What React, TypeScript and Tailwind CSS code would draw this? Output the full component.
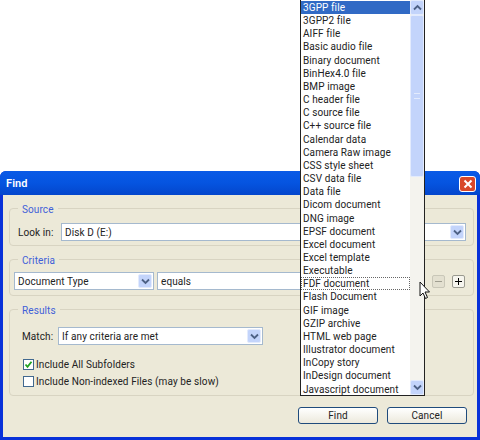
const items = ["3GPP file","3GPP2 file","AIFF file","Basic audio file","Binary document","BinHex4.0 file","BMP image","C header file","C source file","C++ source file","Calendar data","Camera Raw image","CSS style sheet","CSV data file","Data file","Dicom document","DNG image","EPSF document","Excel document","Excel template","Executable","FDF document","Flash Document","GIF image","GZIP archive","HTML web page","Illustrator document","InCopy story","InDesign document","Javascript document"];

function Chevron({ up = false }: { up?: boolean }) {
  return (
    <svg width="9" height="7" viewBox="0 0 9 7" className={up ? "rotate-180" : ""}>
      <path d="M1 1.5 L4.5 5 L8 1.5" fill="none" stroke="#4d6185" strokeWidth="1.8" />
    </svg>
  );
}

function Arrow() {
  return (
    <div className="w-[14px] self-stretch m-px flex items-center justify-center rounded-[2px] bg-[#c3d4fb] border border-[#e3ebfd]">
      <Chevron />
    </div>
  );
}

function Select({ text, className }: { text: string; className: string }) {
  return (
    <div className={`h-[18px] flex items-center bg-white border border-[#a5b9ce] ${className}`}>
      <span className="flex-1 pl-[3px] truncate">{text}</span>
      <Arrow />
    </div>
  );
}

function Group({ title, className, children }: { title: string; className: string; children: any }) {
  return (
    <div className={`relative ml-[6px] mr-[3px] border border-[#d8d4c2] rounded-[4px] ${className}`}>
      <span className="absolute left-[8px] top-[-6px] px-[4px] bg-[#ece9d8] text-[#3f5fd8] leading-[14px]">{title}</span>
      {children}
    </div>
  );
}

function Check({ checked, label }: { checked?: boolean; label: string }) {
  return (
    <div className="flex items-center gap-[2px] h-[17px]">
      <div className="w-[11px] h-[11px] border border-[#41688f] bg-white flex items-center justify-center">
        {checked && (
          <svg width="9" height="9" viewBox="0 0 9 9">
            <path d="M1.5 4.5 L3.5 6.8 L7.5 1.8" fill="none" stroke="#21a121" strokeWidth="1.8" />
          </svg>
        )}
      </div>
      <span>{label}</span>
    </div>
  );
}

function Btn({ text }: { text: string }) {
  return (
    <div className="h-[17px] w-[80px] flex items-center justify-center rounded-[3px] border border-[#1f4b7c] bg-gradient-to-b from-white to-[#ece9dc]">
      {text}
    </div>
  );
}

export default function App() {
  return (
    <div className="relative w-[480px] h-[440px] bg-white overflow-hidden pt-[171px] text-[10px] tracking-[0.1px] leading-[13px] text-[#222]" style={{ fontFamily: 'Roboto, sans-serif' }}>
      <div className="h-[269px] flex flex-col rounded-t-[6px] bg-[#0831d9] px-[3px] pb-[3px]">
        <div className="h-[24px] -mx-[3px] px-[6px] flex items-center justify-between rounded-t-[6px] bg-gradient-to-b from-[#0a5ae6] via-[#0554e0] to-[#0446cc]">
          <span className="text-white font-semibold text-[11px]">Find</span>
          <div className="w-[17px] h-[16px] rounded-[3px] border border-white bg-[#d8482a] flex items-center justify-center mt-[1px] -mr-[2px]">
            <svg width="10" height="10" viewBox="0 0 10 10">
              <path d="M1.5 1.5 L8.5 8.5 M8.5 1.5 L1.5 8.5" stroke="white" strokeWidth="2" />
            </svg>
          </div>
        </div>
        <div className="flex-1 bg-[#ece9d8] flex flex-col pt-[13px]">
          <Group title="Source" className="h-[38px] pl-[8px] pr-[7px] pt-[14px]">
            <div className="flex items-center">
              <span className="w-[43px]">Look in:</span>
              <Select text="Disk D (E:)" className="flex-1" />
            </div>
          </Group>
          <Group title="Criteria" className="h-[37px] mt-[13px] pl-[4px] pr-[8px] pt-[12px]">
            <div className="flex items-center">
              <Select text="Document Type" className="w-[140px]" />
              <Select text="equals" className="w-[160px] ml-[3px]" />
              <div className="flex-1" />
              <div className="w-[13px] h-[13px] rounded-[2px] border border-[#c9c7b8] bg-[#e3e0d0] flex items-center justify-center mr-[7px]">
                <div className="w-[7px] h-[1px] bg-[#a09e90]" />
              </div>
              <div className="w-[13px] h-[13px] rounded-[2px] border border-[#9a9a90] bg-[#f6f5ee] relative flex items-center justify-center">
                <div className="w-[7px] h-[1px] bg-black" />
                <div className="absolute w-[1px] h-[7px] bg-black" />
              </div>
            </div>
          </Group>
          <Group title="Results" className="h-[87px] mt-[13px] pl-[13px] pt-[17px]">
            <div className="flex items-center -ml-[1px]">
              <span className="w-[36px]">Match:</span>
              <Select text="If any criteria are met" className="w-[205px]" />
            </div>
            <div className="mt-[11px]">
              <Check checked label="Include All Subfolders" />
              <Check label="Include Non-indexed Files (may be slow)" />
            </div>
          </Group>
          <div className="flex justify-end gap-[9px] mt-[11px] pr-[10px]">
            <Btn text="Find" />
            <Btn text="Cancel" />
          </div>
        </div>
      </div>

      {/* open dropdown list */}
      <div className="absolute left-[300px] top-0 w-[125px] h-[396px] bg-white border-x border-b border-[#222] flex">
        <div className="flex-1 pt-[1px] min-w-0">
          {items.map((t, i) => (
            <div key={t} className={`h-[13.17px] leading-[13px] pl-[2px] whitespace-nowrap ${i === 0 ? "bg-[#316ac5] text-white" : ""} ${i === 21 ? "outline-1 outline-dotted outline-[#666] -outline-offset-1" : ""}`}>
              {t}
            </div>
          ))}
        </div>
        <div className="w-[14px] bg-[#f4f3ee] flex flex-col">
          <div className="h-[15px] bg-[#c3d4fb] border border-[#e3ebfd] rounded-[2px] flex items-center justify-center"><Chevron up /></div>
          <div className="h-[162px] bg-[#c3d4fb] border border-[#e3ebfd] rounded-[2px] flex items-center justify-center">
            <div className="w-[6px] h-[6px] border-y border-[#e3ebfd]" />
          </div>
          <div className="flex-1" />
          <div className="h-[15px] bg-[#c3d4fb] border border-[#e3ebfd] rounded-[2px] flex items-center justify-center"><Chevron /></div>
        </div>
      </div>

      {/* mouse pointer */}
      <svg className="absolute left-[419px] top-[281px]" width="12" height="19" viewBox="0 0 12 19">
        <path d="M1 1 L1 15 L4 12 L6.5 17.5 L8.5 16.5 L6 11 L10.5 11 Z" fill="white" stroke="#111" strokeWidth="1" />
      </svg>
    </div>
  );
}
